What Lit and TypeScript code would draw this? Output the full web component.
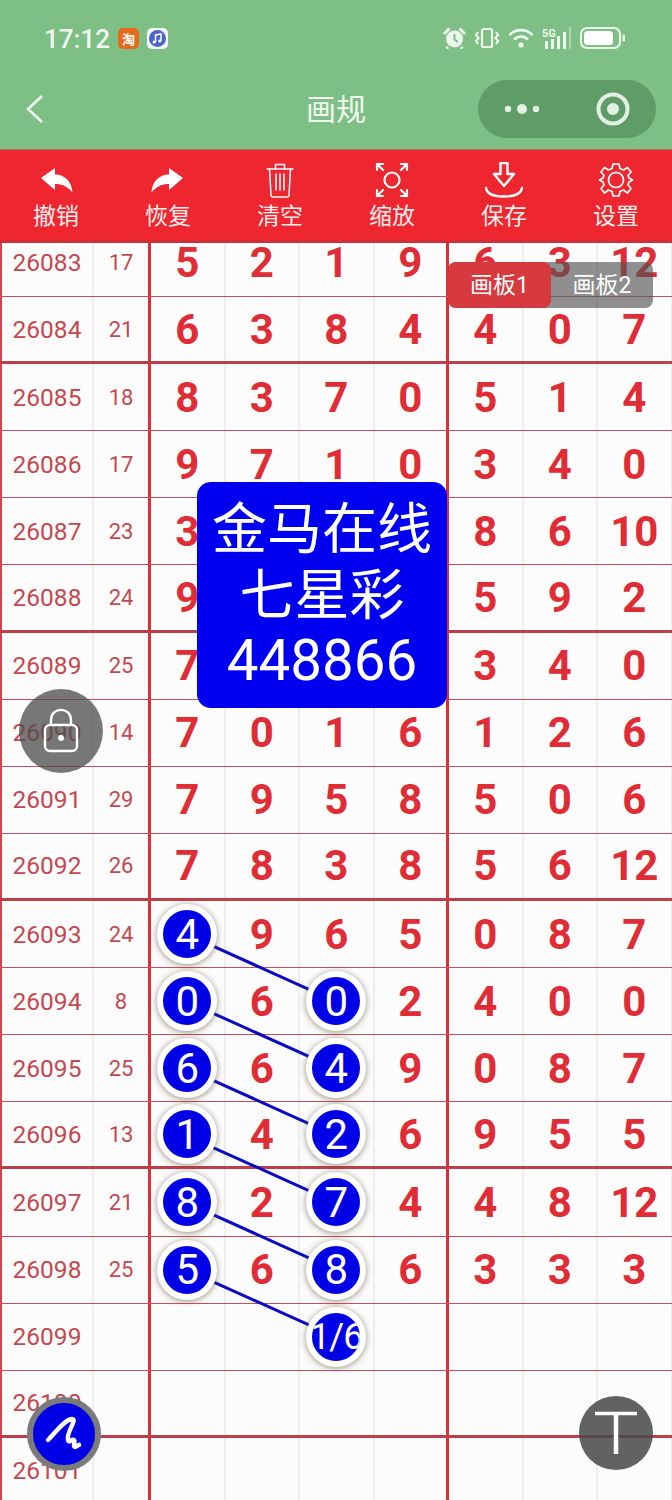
import { LitElement, html, css, svg } from "lit";
import { customElement } from "lit/decorators.js";

type Row = [string, string, (string | number)[], (string | number)[]];

const ROWS: Row[] = [
  ["26083", "17", [5, 2, 1, 9], [6, 3, 12]],
  ["26084", "21", [6, 3, 8, 4], [4, 0, 7]],
  ["26085", "18", [8, 3, 7, 0], [5, 1, 4]],
  ["26086", "17", [9, 7, 1, 0], [3, 4, 0]],
  ["26087", "23", [3, "", "", ""], [8, 6, 10]],
  ["26088", "24", [9, "", "", ""], [5, 9, 2]],
  ["26089", "25", [7, "", "", ""], [3, 4, 0]],
  ["26090", "14", [7, 0, 1, 6], [1, 2, 6]],
  ["26091", "29", [7, 9, 5, 8], [5, 0, 6]],
  ["26092", "26", [7, 8, 3, 8], [5, 6, 12]],
  ["26093", "24", ["(4)", 9, 6, 5], [0, 8, 7]],
  ["26094", "8", ["(0)", 6, "(0)", 2], [4, 0, 0]],
  ["26095", "25", ["(6)", 6, "(4)", 9], [0, 8, 7]],
  ["26096", "13", ["(1)", 4, "(2)", 6], [9, 5, 5]],
  ["26097", "21", ["(8)", 2, "(7)", 4], [4, 8, 12]],
  ["26098", "25", ["(5)", 6, "(8)", 6], [3, 3, 3]],
  ["26099", "", ["", "", "(1/6)", ""], ["", "", ""]],
  ["26100", "", ["", "", "", ""], ["", "", ""]],
  ["26101", "", ["", "", "", ""], ["", "", ""]],
];

const ROW_H = 67.12;
const ROW_TOP = 229.9;
const centerY = (i: number) => ROW_TOP + ROW_H * (i + 0.5);

const TOOLS: { label: string; icon: unknown }[] = [
  {
    label: "撤销",
    icon: svg`<path fill="#fff" d="M5 16 L19 6 V12.5 C29 12.5 36 20 36.5 30.5 C32 24.5 26 22 19 22 V28 Z"/>`,
  },
  {
    label: "恢复",
    icon: svg`<path fill="#fff" d="M35 16 L21 6 V12.5 C11 12.5 4 20 3.5 30.5 C8 24.5 14 22 21 22 V28 Z"/>`,
  },
  {
    label: "清空",
    icon: svg`<g fill="none" stroke="#fff" stroke-width="1.5" stroke-linejoin="round" stroke-linecap="round">
      <path d="M7 7 H33"/><path d="M15.5 7 V2.5 H24.5 V7"/>
      <path d="M9.5 7 L11 33 Q11.2 35 13 35 H27 Q28.8 35 29 33 L30.5 7"/>
      <path d="M16 12 V28 M20 12 V28 M24 12 V28"/></g>`,
  },
  {
    label: "缩放",
    icon: svg`<g fill="none" stroke="#fff" stroke-width="2.2" stroke-linecap="round" stroke-linejoin="round">
      <circle cx="20" cy="18" r="7.5"/>
      <path d="M5 8 V2 H11 M5 2 L11 8"/><path d="M35 8 V2 H29 M35 2 L29 8"/>
      <path d="M5 28 V34 H11 M5 34 L11 28"/><path d="M35 28 V34 H29 M35 34 L29 28"/></g>`,
  },
  {
    label: "保存",
    icon: svg`<g fill="none" stroke="#fff" stroke-width="2.4" stroke-linejoin="round" stroke-linecap="round">
      <path d="M16.5 1 H23.5 V12 H30 L20 24 L10 12 H16.5 Z"/>
      <path d="M2 26 C3 32 10 34.5 20 34.5 C30 34.5 37 32 38 26"/></g>`,
  },
  {
    label: "设置",
    icon: svg`<g fill="none" stroke="#fff" stroke-width="1.7" stroke-linejoin="round">
      <circle cx="20" cy="18" r="7.5"/>
      <path d="M17 2 H23 L24 6.5 L27.5 8 L31.5 5.5 L35 10 L32 13.5 L33 16 L36.5 18 L33 20 L32 23 L35 26.5 L31.5 31 L27.5 28 L24 29.5 L23 34 H17 L16 29.5 L12.5 28 L8.5 31 L5 26.5 L8 23 L7 20 L3.5 18 L7 16 L8 13.5 L5 10 L8.5 5.5 L12.5 8 L16 6.5 Z"/></g>`,
  },
];

@customElement("app-root")
export class AppRoot extends LitElement {
  static styles = css`
    :host {
      display: block;
      width: 672px;
      height: 1500px;
      position: relative;
      overflow: hidden;
      background: #fdfcfd;
      font-family: Roboto, "Noto Sans CJK SC", sans-serif;
    }
    .head {
      height: 150px;
      box-sizing: border-box;
      background: #7dbf84;
      border-bottom: 1px solid #a8705a;
      display: flex;
      flex-direction: column;
      color: #f0f8f0;
    }
    .status {
      height: 78px;
      box-sizing: border-box;
      padding: 26px 46px 0 44px;
      display: flex;
      align-items: flex-start;
    }
    .time {
      font-size: 26px;
      line-height: 26px;
      font-weight: 500;
      margin-right: 8px;
    }
    .app {
      width: 21px;
      height: 21px;
      border-radius: 5px;
      margin: 2px 8px 0 0;
      display: flex;
      align-items: center;
      justify-content: center;
      font-size: 13px;
      line-height: 21px;
      color: #fff;
    }
    .app.tao {
      background: #e8691c;
      font-family: "Noto Sans CJK SC", sans-serif;
      font-weight: 700;
    }
    .app.music {
      background: #f4f6fb;
    }
    .sys {
      margin-left: auto;
      display: flex;
      align-items: center;
      gap: 8px;
      height: 24px;
    }
    .nav {
      flex: 1;
      display: flex;
      align-items: center;
      position: relative;
      padding: 0 16px 9px 24px;
    }
    .title {
      position: absolute;
      left: 0;
      right: 0;
      top: 8px;
      text-align: center;
      font-family: "Noto Sans CJK SC", sans-serif;
      font-size: 30px;
      line-height: 42px;
    }
    .pill {
      margin-left: auto;
      width: 178px;
      height: 58px;
      border-radius: 29px;
      background: #5f9c67;
    }
    .tools {
      height: 90px;
      background: #ee2630;
      display: grid;
      grid-template-columns: repeat(6, 112px);
    }
    .tool {
      display: flex;
      flex-direction: column;
      align-items: center;
      padding-top: 12px;
      color: #fdeeee;
    }
    .tool span {
      font-family: "Noto Sans CJK SC", sans-serif;
      font-size: 23px;
      line-height: 32px;
    }
    .grid {
      height: 1260px;
      box-sizing: border-box;
      border-top: 3px solid #cf3038;
      overflow: hidden;
    }
    .rows {
      margin-top: -13.1px;
    }
    .row {
      height: ${ROW_H}px;
      box-sizing: border-box;
      display: grid;
      grid-template-columns: 94px 57px repeat(7, 74.5px);
      border-bottom: 1px solid #c4505c;
    }
    .row.major {
      border-bottom: 3px solid #bd3f49;
    }
    .cell {
      box-sizing: border-box;
      display: flex;
      align-items: center;
      justify-content: center;
      border-right: 2px solid #eeecee;
      font-size: 42px;
      font-weight: 700;
      color: #e02d35;
    }
    .cell.id,
    .cell.sum {
      font-weight: 400;
      color: #c4484f;
    }
    .cell.id {
      border-left: 2px solid #d8414a;
      font-size: 24.5px;
    }
    .cell.sum {
      font-size: 22px;
      border-right: 3px solid #dc3038;
    }
    .cell.bar {
      border-right: 3px solid #dc3038;
    }
    .ball {
      width: 60px;
      height: 60px;
      flex: none;
      box-sizing: border-box;
      border-radius: 50%;
      border: 6px solid #fff;
      background: #0000e6;
      color: #fff;
      font-size: 42px;
      font-weight: 400;
      display: flex;
      align-items: center;
      justify-content: center;
      box-shadow: 0 1px 6px rgba(90, 80, 50, 0.65);
      position: relative;
      z-index: 2;
    }
    .ball.small {
      font-size: 36px;
      letter-spacing: -1px;
      white-space: nowrap;
      overflow: hidden;
    }
    .links {
      position: absolute;
      left: 0;
      top: 0;
      z-index: 1;
    }
    .tabs {
      position: absolute;
      left: 448px;
      top: 262px;
      width: 205px;
      height: 46px;
      border-radius: 8px;
      background: rgba(85, 85, 85, 0.65);
      display: flex;
      z-index: 3;
      font-family: Roboto, "Noto Sans CJK SC", sans-serif;
      font-size: 23px;
      color: #fff;
    }
    .tab {
      flex: 1;
      display: flex;
      align-items: center;
      justify-content: center;
      border-radius: 8px;
      padding-bottom: 4px;
      box-sizing: border-box;
    }
    .tab.on {
      flex: none;
      width: 103px;
      background: #d63a3e;
    }
    .promo {
      position: absolute;
      left: 197px;
      top: 482px;
      width: 250px;
      height: 226px;
      box-sizing: border-box;
      padding-top: 14px;
      border-radius: 14px;
      background: #0000f0;
      color: #fff;
      text-align: center;
      font-size: 55px;
      line-height: 66px;
      z-index: 3;
    }
    .promo span {
      font-size: 56.5px;
    }
    .fab {
      position: absolute;
      border-radius: 50%;
      z-index: 3;
      display: flex;
      align-items: center;
      justify-content: center;
    }
    .lock {
      left: 19px;
      top: 689px;
      width: 84px;
      height: 84px;
      background: rgba(75, 75, 75, 0.75);
    }
    .pen {
      left: 27px;
      top: 1397px;
      width: 74px;
      height: 74px;
      box-sizing: border-box;
      border: 6px solid #7b7b7b;
      background: #0000e6;
    }
    .top {
      left: 579px;
      top: 1396px;
      width: 74px;
      height: 74px;
      background: rgba(70, 70, 70, 0.85);
    }
  `;

  private cell(v: string | number, bar: boolean) {
    const cls = "cell" + (bar ? " bar" : "");
    if (typeof v === "string" && v.startsWith("(")) {
      const t = v.slice(1, -1);
      return html`<div class=${cls}>
        <div class="ball ${t.length > 1 ? "small" : ""}">${t}</div>
      </div>`;
    }
    return html`<div class=${cls}>${v}</div>`;
  }

  render() {
    const links = [10, 11, 12, 13, 14, 15];
    return html`
      <div class="head">
        <div class="status">
          <div class="time">17:12</div>
          <div class="app tao">淘</div>
          <div class="app music">
            <svg width="17" height="17" viewBox="0 0 17 17">
              <circle cx="8.5" cy="8.5" r="8.5" fill="#4a66c8" />
              <path fill="none" stroke="#fff" stroke-width="1.5" d="M6.5 12 V5 L12 4 V11" />
              <circle cx="5.2" cy="12" r="1.6" fill="#fff" />
              <circle cx="10.7" cy="11" r="1.6" fill="#fff" />
            </svg>
          </div>
          <div class="sys">
            <svg width="23" height="22" viewBox="0 0 23 22">
              <circle cx="11.5" cy="12" r="8.5" fill="#eef7ee" />
              <path d="M11.5 7 V12.5 L15 15" fill="none" stroke="#7dbf84" stroke-width="2" />
              <path d="M1 7 L6.5 1.5 M22 7 L16.5 1.5 M5 20 L3.5 21.5 M18 20 L19.5 21.5" stroke="#eef7ee" stroke-width="3" fill="none" />
            </svg>
            <svg width="26" height="22" viewBox="0 0 26 22" fill="none" stroke="#eef7ee" stroke-width="2.2">
              <rect x="8" y="2" width="10" height="18" rx="1.5" />
              <path d="M4 5 L2 8 L4.5 11 L2 14 L4 17 M22 5 L24 8 L21.5 11 L24 14 L22 17" />
            </svg>
            <svg width="26" height="20" viewBox="0 0 26 20" fill="none" stroke="#eef7ee" stroke-width="2.6">
              <path d="M1.5 7 C8 0.5 18 0.5 24.5 7" />
              <path d="M6 11.5 C10 7.5 16 7.5 20 11.5" />
              <circle cx="13" cy="17" r="2.6" fill="#eef7ee" stroke="none" />
            </svg>
            <svg width="30" height="22" viewBox="0 0 30 22">
              <text x="0" y="10" font-size="11" font-weight="700" fill="#eef7ee" font-family="Roboto">5G</text>
              <path fill="#eef7ee" d="M3 14 h3 v8 h-3 z M9 12 h3 v10 h-3 z M15 9 h3 v13 h-3 z M21 5 h3 v17 h-3 z" />
              <path fill="#a9d4ad" d="M27 0 h2 v22 h-2 z" />
            </svg>
            <svg width="46" height="22" viewBox="0 0 46 22">
              <rect x="1" y="1" width="39" height="20" rx="6" fill="none" stroke="#eef7ee" stroke-width="2" />
              <rect x="4" y="4" width="29" height="14" rx="3.5" fill="#fff" />
              <rect x="42.5" y="7.5" width="2.5" height="7" rx="1.2" fill="#eef7ee" />
            </svg>
          </div>
        </div>
        <div class="nav">
          <svg width="20" height="30" viewBox="0 0 20 30" fill="none" stroke="#f0f8f0" stroke-width="2.6">
            <path d="M18 2 L4 15 L18 28" />
          </svg>
          <div class="title">画规</div>
          <div class="pill">
            <svg width="178" height="58" viewBox="0 0 178 58">
              <circle cx="30" cy="29" r="3.2" fill="#e3f0e3" />
              <circle cx="44" cy="29" r="5" fill="#e3f0e3" />
              <circle cx="58" cy="29" r="3.2" fill="#e3f0e3" />
              <circle cx="135" cy="29" r="14.5" fill="none" stroke="#e3f0e3" stroke-width="4" />
              <circle cx="135" cy="29" r="6" fill="#e3f0e3" />
            </svg>
          </div>
        </div>
      </div>

      <div class="tools">
        ${TOOLS.map(
          (t) => html`<div class="tool">
            <svg width="40" height="36" viewBox="0 0 40 36">${t.icon}</svg>
            <span>${t.label}</span>
          </div>`,
        )}
      </div>

      <div class="grid">
        <div class="rows">
          ${ROWS.map(
            ([id, sum, a, b], i) => html`<div class="row ${i % 4 === 1 ? "major" : ""}">
              <div class="cell id">${id}</div>
              <div class="cell sum">${sum}</div>
              ${a.map((v, j) => this.cell(v, j === 3))}
              ${b.map((v) => this.cell(v, false))}
            </div>`,
          )}
        </div>
      </div>

      <svg class="links" width="672" height="1500" viewBox="0 0 672 1500">
        ${links.map(
          (i) => svg`<line x1="187.5" y1=${centerY(i)} x2="336.5" y2=${centerY(i + 1)} stroke="#0a0ac4" stroke-width="3" />`,
        )}
      </svg>

      <div class="tabs">
        <div class="tab on">画板1</div>
        <div class="tab">画板2</div>
      </div>

      <div class="promo">金马在线<br />七星彩<br /><span>448866</span></div>

      <div class="fab lock">
        <svg width="36" height="46" viewBox="0 0 36 46" fill="none" stroke="#fff" stroke-width="2.4">
          <rect x="2" y="17" width="32" height="26" rx="5" />
          <path d="M8 17 V12 C8 -1.5 28 -1.5 28 12 V17" />
          <circle cx="18" cy="30" r="3" fill="#fff" stroke="none" />
        </svg>
      </div>

      <div class="fab pen">
        <svg width="44" height="40" viewBox="0 0 44 40" fill="none" stroke="#fff" stroke-width="4.4" stroke-linecap="round" stroke-linejoin="round">
          <path d="M6 26 C14 18 22 6 30 5 C36 5 24 18 26 26 C27 30 30 24 32 26 C34 28 30 32 33 33 C35 33 37 30 37 31" />
        </svg>
      </div>

      <div class="fab top">
        <svg width="44" height="44" viewBox="0 0 44 44" fill="none" stroke="#fff">
          <path d="M1 2.5 H43" stroke-width="3.5" />
          <path d="M22 2 V43" stroke-width="4.5" />
        </svg>
      </div>
    `;
  }
}
